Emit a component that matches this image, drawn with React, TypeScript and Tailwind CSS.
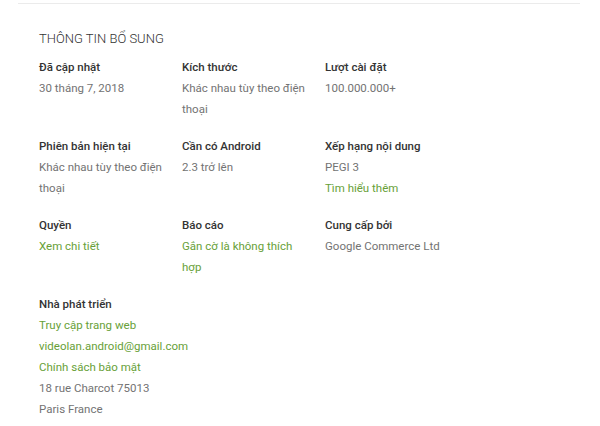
import React from "react";

type Line = { text: string; link?: boolean };
type Item = { label: string; lines: Line[] };

const rows: Item[][] = [
  [
    { label: "Đã cập nhật", lines: [{ text: "30 tháng 7, 2018" }] },
    { label: "Kích thước", lines: [{ text: "Khác nhau tùy theo điện thoại" }] },
    { label: "Lượt cài đặt", lines: [{ text: "100.000.000+" }] },
  ],
  [
    { label: "Phiên bản hiện tại", lines: [{ text: "Khác nhau tùy theo điện thoại" }] },
    { label: "Cần có Android", lines: [{ text: "2.3 trở lên" }] },
    { label: "Xếp hạng nội dung", lines: [{ text: "PEGI 3" }, { text: "Tìm hiểu thêm", link: true }] },
  ],
  [
    { label: "Quyền", lines: [{ text: "Xem chi tiết", link: true }] },
    { label: "Báo cáo", lines: [{ text: "Gắn cờ là không thích hợp", link: true }] },
    { label: "Cung cấp bởi", lines: [{ text: "Google Commerce Ltd" }] },
  ],
  [
    {
      label: "Nhà phát triển",
      lines: [
        { text: "Truy cập trang web", link: true },
        { text: "videolan.android@gmail.com", link: true },
        { text: "Chính sách bảo mật", link: true },
        { text: "18 rue Charcot 75013" },
        { text: "Paris France" },
      ],
    },
  ],
];

function Cell({ item }: { item: Item }) {
  return (
    <div className="w-[143px] pr-[16px]">
      <div className="font-medium text-[#333333]">{item.label}</div>
      {item.lines.map((l, i) => (
        <div key={i} className={l.link ? "text-[#689f38]" : "text-[#737373]"}>
          {l.text}
        </div>
      ))}
    </div>
  );
}

export default function App() {
  return (
    <div
      className="w-[600px] h-[426px] bg-white overflow-hidden text-[11.5px] leading-[21px]"
      style={{ fontFamily: "Roboto, 'Noto Sans', sans-serif" }}
    >
      <div className="mx-[18px] mt-[3px] w-[562px] h-px bg-[#ebebeb]" />
      <div className="pl-[39px] pt-[24px]">
        <div className="text-[#333333] text-[13px] font-light mb-[8px]">THÔNG TIN BỔ SUNG</div>
        <div className="flex flex-col gap-[16px]">
          {rows.map((row, ri) => (
            <div key={ri} className="flex">
              {row.map((item, ci) => (
                <Cell key={ci} item={item} />
              ))}
            </div>
          ))}
        </div>
      </div>
    </div>
  );
}
